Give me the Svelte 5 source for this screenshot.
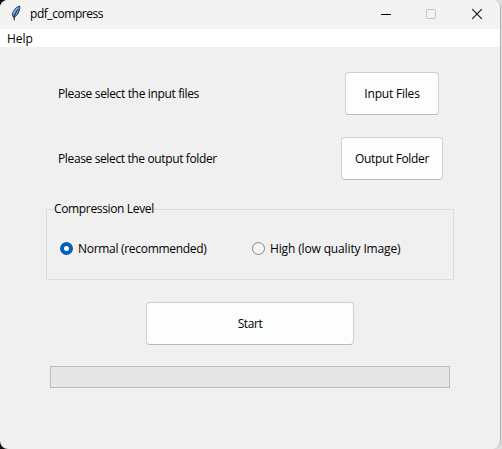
<script>
  let level = $state('normal');
  const pickers = [
    { id: 'input', label: 'Please select the input files', button: 'Input Files' },
    { id: 'output', label: 'Please select the output folder', button: 'Output Folder' }
  ];
  const levels = [
    { id: 'normal', label: 'Normal (recommended)' },
    { id: 'high', label: 'High (low quality Image)' }
  ];
</script>

<div class="desktop">
  <div class="window">
    <header class="titlebar">
      <svg class="feather" width="12" height="17" viewBox="0 0 12 17">
        <path d="M9.500 1C6.500 1.800 3 5.500 2.300 9.300L3.400 12.500C6.500 11.500 9 8 9.700 3.500Q9.900 1.500 9.500 1Z" fill="#5b9be6" stroke="#253244" stroke-width="1" />
        <path d="M8.300 4.300C6.500 6.500 4.700 9 4.300 12V15.500" fill="none" stroke="#17243a" stroke-width="1" />
        <path d="M7.500 2.800C5.500 4.400 4 6.500 3.400 9" fill="none" stroke="#a7cdf5" stroke-width=".8" />
      </svg>
      <span class="title">pdf_compress</span>
      <div class="controls">
        <svg width="12" height="12" viewBox="0 0 12 12"><path d="M0 6.500H10" stroke="#000" fill="none" /></svg>
        <svg width="12" height="12" viewBox="0 0 12 12"><rect x=".500" y="1.500" width="9" height="9" rx="1" stroke="#c1c1c1" fill="none" /></svg>
        <svg width="12" height="12" viewBox="0 0 12 12"><path d="M1.200 1.200L10.800 10.800M10.800 1.200L1.200 10.800" stroke="#111" stroke-width="1.100" fill="none" /></svg>
      </div>
    </header>
    <nav class="menubar"><span class="help">Help</span></nav>
    <main>
      {#each pickers as p}
        <div class="row">
          <span class="label {p.id}">{p.label}</span>
          <div class="cell"><button class="btn {p.id}"><span>{p.button}</span></button></div>
        </div>
      {/each}
      <fieldset>
        <legend><span>Compression Level</span></legend>
        <div class="options">
          {#each levels as l}
            <label class="option {l.id}">
              <input type="radio" name="level" value={l.id} bind:group={level} />
              <span>{l.label}</span>
            </label>
          {/each}
        </div>
      </fieldset>
      <button class="btn start"><span>Start</span></button>
      <div class="progress"></div>
    </main>
  </div>
</div>

<style>
  :global(body) { margin: 0; }
  .desktop {
    width: 502px;
    height: 449px;
    box-sizing: border-box;
    overflow: hidden;
    background: linear-gradient(90deg, #111 0 50%, #dedede 50%);
    font: 12px/16px "Open Sans", "Noto Sans", sans-serif;
    color: #000;
    white-space: nowrap;
  }
  .window {
    width: 501px;
    height: 449px;
    box-sizing: border-box;
    border-right: 1px solid #b0b0b0;
    border-radius: 8px;
    overflow: hidden;
    background: #f0f0f0;
  }
  .titlebar {
    display: flex;
    align-items: center;
    height: 29px;
    box-sizing: border-box;
    padding: 0 17px 2px 10px;
    background: #f3f3f3;
  }
  .title { margin-left: 8px; letter-spacing: -0.45px; }
  .controls { display: flex; gap: 33px; margin-left: auto; }
  svg { display: block; }
  .menubar { height: 18px; padding-left: 7px; background: #fff; line-height: 19px; box-sizing: border-box; }
  main { display: flex; flex-direction: column; padding-top: 25px; }
  .row { display: flex; align-items: center; height: 43px; margin-bottom: 22px; padding-left: 58px; }
  .label { width: 267px; letter-spacing: -0.35px; }
  .label.output { letter-spacing: -0.37px; }
  .cell { display: flex; justify-content: center; width: 134px; }
  .btn {
    height: 43px;
    box-sizing: border-box;
    padding: 0;
    border: 1px solid #d0d0d0;
    border-bottom-color: #b9b9b9;
    border-radius: 4px;
    background: #fdfdfd;
    color: #000;
    font: inherit;
    letter-spacing: -0.2px;
  }
  .btn.input { width: 94px; }
  .btn.output { width: 102px; letter-spacing: -0.34px; }
  fieldset {
    width: 408px;
    height: 79px;
    box-sizing: border-box;
    min-width: 0;
    margin: -1px 0 0 46px;
    padding: 0;
    border: 1px solid #dcdcdc;
  }
  legend { height: 16px; margin-left: 7px; padding: 0; letter-spacing: -0.35px; }
  .options { display: flex; padding: 23px 0 0 13px; }
  .option { display: flex; align-items: center; height: 16px; letter-spacing: -0.3px; }
  .option span { padding-top: 2px; }
  .option.normal { width: 192px; }
  .option.high { letter-spacing: -0.14px; }
  input {
    appearance: none;
    width: 13px;
    height: 13px;
    box-sizing: border-box;
    margin: 0 5px 0 0;
    border: 1px solid #858585;
    border-radius: 50%;
    background: #f5f5f5;
  }
  input:checked { border: 4px solid #005fb8; background: #fff; }
  .start { width: 208px; margin: 22px 0 0 146px; letter-spacing: -0.4px; }
  .progress {
    width: 400px;
    height: 22px;
    box-sizing: border-box;
    margin: 21px 0 0 50px;
    border: 1px solid #bcbcbc;
    background: #e6e6e6;
  }
</style>
